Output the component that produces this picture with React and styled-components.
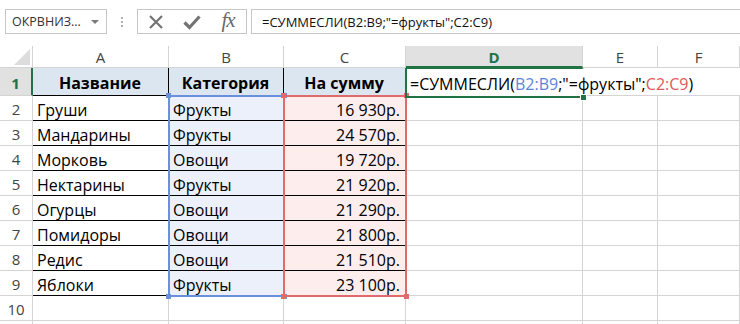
import React from "react";
import styled, { createGlobalStyle } from "styled-components";

const GREEN = "#217346";
const BLUE = "#6a8fdc";
const RED = "#e06a6c";
const GRID = "#d4d4d4";

const GlobalStyle = createGlobalStyle`
  html, body { margin: 0; padding: 0; background: #fff; }
  body {
    font-family: "Open Sans", "Liberation Sans", sans-serif;
    width: 740px;
    height: 324px;
    overflow: hidden;
  }
  * { box-sizing: border-box; }
`;

const Window = styled.div`
  width: 740px;
  height: 324px;
  overflow: hidden;
  display: flex;
  flex-direction: column;
`;

const FormulaBar = styled.div`
  height: 46px;
  flex: none;
  display: flex;
  align-items: flex-start;
  padding: 9px 0 0 5px;
`;

const NameBox = styled.div`
  width: 102px;
  height: 25px;
  border: 1px solid #c6c6c6;
  display: flex;
  align-items: center;
  justify-content: space-between;
  padding: 0 7px 0 6px;
  font-size: 12.5px;
  color: #333;
`;

const DropArrow = styled.span`
  width: 0;
  height: 0;
  border-left: 4px solid transparent;
  border-right: 4px solid transparent;
  border-top: 4px solid #7a7a7a;
`;

const Grip = styled.div`
  width: 30px;
  height: 25px;
  display: flex;
  flex-direction: column;
  align-items: center;
  justify-content: center;
  gap: 2px;
  span {
    width: 2px;
    height: 2px;
    background: #b0b0b0;
  }
`;

const ButtonGroup = styled.div`
  width: 110px;
  height: 25px;
  border: 1px solid #c6c6c6;
  display: flex;
`;

const IconSlot = styled.div`
  width: 36px;
  height: 100%;
  display: flex;
  align-items: center;
  justify-content: center;
  color: #707070;
`;

const Fx = styled.span`
  font-family: "Liberation Serif", "DejaVu Serif", serif;
  font-style: italic;
  font-size: 21px;
  color: #6a6a6a;
  letter-spacing: -1px;
  line-height: 1;
  margin-top: -2px;
`;

const FormulaInput = styled.div`
  flex: 1;
  height: 25px;
  margin: 0 -4px 0 4px;
  border: 1px solid #c6c6c6;
  display: flex;
  align-items: center;
  padding-left: 10px;
  font-size: 13px;
  color: #111;
  white-space: nowrap;
`;

const Sheet = styled.div`
  display: grid;
  grid-template-columns: 33px 136px 115px 122px 177px 75px 1fr;
  grid-template-rows: 22px 28px repeat(10, 25px);
`;

const Corner = styled.div`
  grid-area: 1 / 1;
  background: #fff;
  border-right: 1px solid ${GRID};
  border-bottom: 1px solid ${GRID};
  position: relative;
  &::after {
    content: "";
    position: absolute;
    right: 2px;
    bottom: 2px;
    width: 0;
    height: 0;
    border-left: 16px solid transparent;
    border-bottom: 16px solid #dcdcdc;
  }
`;

const ColHeader = styled.div`
  grid-area: 1 / ${(p) => p.$c};
  background: ${(p) => (p.$active ? "#e1e1e1" : "#fff")};
  border-right: 1px solid ${GRID};
  border-bottom: ${(p) => (p.$active ? `2px solid ${GREEN}` : `1px solid ${GRID}`)};
  color: ${(p) => (p.$active ? GREEN : "#444")};
  font-weight: ${(p) => (p.$active ? 700 : 400)};
  font-size: 15px;
  display: flex;
  align-items: center;
  justify-content: center;
  padding-top: 1px;
`;

const RowHeader = styled.div`
  grid-area: ${(p) => p.$r} / 1;
  background: ${(p) => (p.$active ? "#e1e1e1" : "#fff")};
  border-right: ${(p) => (p.$active ? `2px solid ${GREEN}` : `1px solid ${GRID}`)};
  border-bottom: 1px solid ${GRID};
  color: ${(p) => (p.$active ? GREEN : "#444")};
  font-weight: ${(p) => (p.$active ? 700 : 400)};
  font-size: 15px;
  display: flex;
  align-items: center;
  justify-content: center;
  padding-top: 2px;
`;

const Cell = styled.div`
  grid-area: ${(p) => p.$r} / ${(p) => p.$c};
  background: ${(p) => p.$fill || "#fff"};
  border-right: ${(p) => (p.$noRight ? "none" : `1px solid ${p.$lined ? "#000" : GRID}`)};
  border-bottom: 1px solid ${(p) => (p.$lined ? "#000" : GRID)};
  font-size: 16px;
  color: #000;
  font-weight: ${(p) => (p.$bold ? 700 : 400)};
  display: flex;
  align-items: center;
  justify-content: ${(p) =>
    p.$align === "right" ? "flex-end" : p.$align === "center" ? "center" : "flex-start"};
  padding: 3px 5px 0 4px;
  white-space: nowrap;
  overflow: hidden;
`;

const RangeBox = styled.div`
  grid-column: ${(p) => p.$c};
  grid-row: ${(p) => p.$from} / ${(p) => p.$to};
  margin: -1px;
  border: 2px solid ${(p) => p.$color};
  position: relative;
  z-index: 2;
  pointer-events: none;
`;

const Handle = styled.span`
  position: absolute;
  width: 5px;
  height: 5px;
  background: ${(p) => p.$color};
  ${(p) => (p.$top ? "top: -4px;" : "bottom: -4px;")}
  ${(p) => (p.$left ? "left: -4px;" : "right: -4px;")}
`;

const EditCell = styled.div`
  grid-area: 2 / 5;
  margin: 0 -1px -2px -1px;
  border: 2px solid ${GREEN};
  border-top-width: 1px;
  border-right-color: transparent;
  position: relative;
  z-index: 3;
  display: flex;
  align-items: center;
  padding: 2px 0 0 3px;
  font-size: 16px;
  color: #000;
  white-space: nowrap;
  overflow: visible;
`;

const FillHandle = styled.span`
  position: absolute;
  right: -5px;
  bottom: -5px;
  width: 7px;
  height: 7px;
  background: ${GREEN};
  border: 1px solid #fff;
`;

const Ref = styled.span`
  color: ${(p) => p.$color};
`;

const data = [
  ["Груши", "Фрукты", "16 930р."],
  ["Мандарины", "Фрукты", "24 570р."],
  ["Морковь", "Овощи", "19 720р."],
  ["Нектарины", "Фрукты", "21 920р."],
  ["Огурцы", "Овощи", "21 290р."],
  ["Помидоры", "Овощи", "21 800р."],
  ["Редис", "Овощи", "21 510р."],
  ["Яблоки", "Фрукты", "23 100р."],
];

const letters = ["A", "B", "C", "D", "E", "F"];

function Corners({ color }) {
  return (
    <>
      <Handle $color={color} $top $left />
      <Handle $color={color} $top />
      <Handle $color={color} $left />
      <Handle $color={color} />
    </>
  );
}

export default function App() {
  const cells = [];

  // header row of the table (row 1)
  ["Название", "Категория", "На сумму"].forEach((t, i) => {
    cells.push(
      <Cell key={`h${i}`} $r={2} $c={i + 2} $lined $bold $align="center" $fill="#dce6f1">
        {t}
      </Cell>
    );
  });
  cells.push(<Cell key="e1" $r={2} $c={6} $noRight />);
  cells.push(<Cell key="f1" $r={2} $c={7} $noRight />);

  // table body, rows 2..9
  data.forEach((row, i) => {
    const r = i + 3;
    cells.push(<Cell key={`a${r}`} $r={r} $c={2} $lined>{row[0]}</Cell>);
    cells.push(<Cell key={`b${r}`} $r={r} $c={3} $lined $fill="#ebf0fa">{row[1]}</Cell>);
    cells.push(
      <Cell key={`c${r}`} $r={r} $c={4} $lined $fill="#fdeded" $align="right">
        {row[2]}
      </Cell>
    );
    [5, 6, 7].forEach((c) => cells.push(<Cell key={`x${r}-${c}`} $r={r} $c={c} />));
  });

  // empty rows 10, 11
  [11, 12].forEach((r) => {
    [2, 3, 4, 5, 6, 7].forEach((c) => cells.push(<Cell key={`y${r}-${c}`} $r={r} $c={c} />));
  });

  return (
    <Window>
      <GlobalStyle />
      <FormulaBar>
        <NameBox>
          <span>ОКРВНИЗ...</span>
          <DropArrow />
        </NameBox>
        <Grip>
          <span />
          <span />
          <span />
        </Grip>
        <ButtonGroup>
          <IconSlot>
            <svg width="16" height="16" viewBox="0 0 16 16">
              <path d="M2 2 L14 14 M14 2 L2 14" stroke="#747474" strokeWidth="2.2" fill="none" />
            </svg>
          </IconSlot>
          <IconSlot>
            <svg width="18" height="16" viewBox="0 0 18 16">
              <path d="M1.5 8.5 L6.5 13.5 L16.5 2.5" stroke="#747474" strokeWidth="3.2" fill="none" />
            </svg>
          </IconSlot>
          <IconSlot>
            <Fx>fx</Fx>
          </IconSlot>
        </ButtonGroup>
        <FormulaInput>=СУММЕСЛИ(B2:B9;"=фрукты";C2:C9)</FormulaInput>
      </FormulaBar>

      <Sheet>
        <Corner />
        {letters.map((l, i) => (
          <ColHeader key={l} $c={i + 2} $active={l === "D"}>
            {l}
          </ColHeader>
        ))}
        {Array.from({ length: 11 }, (_, i) => (
          <RowHeader key={i} $r={i + 2} $active={i === 0}>
            {i < 10 ? i + 1 : ""}
          </RowHeader>
        ))}
        {cells}
        <RangeBox $c={3} $from={3} $to={11} $color={BLUE}>
          <Corners color={BLUE} />
        </RangeBox>
        <RangeBox $c={4} $from={3} $to={11} $color={RED}>
          <Corners color={RED} />
        </RangeBox>
        <EditCell>
          =СУММЕСЛИ(<Ref $color="#5b84d8">B2:B9</Ref>;"=фрукты";<Ref $color="#e0575c">C2:C9</Ref>)
          <FillHandle />
        </EditCell>
      </Sheet>
    </Window>
  );
}
